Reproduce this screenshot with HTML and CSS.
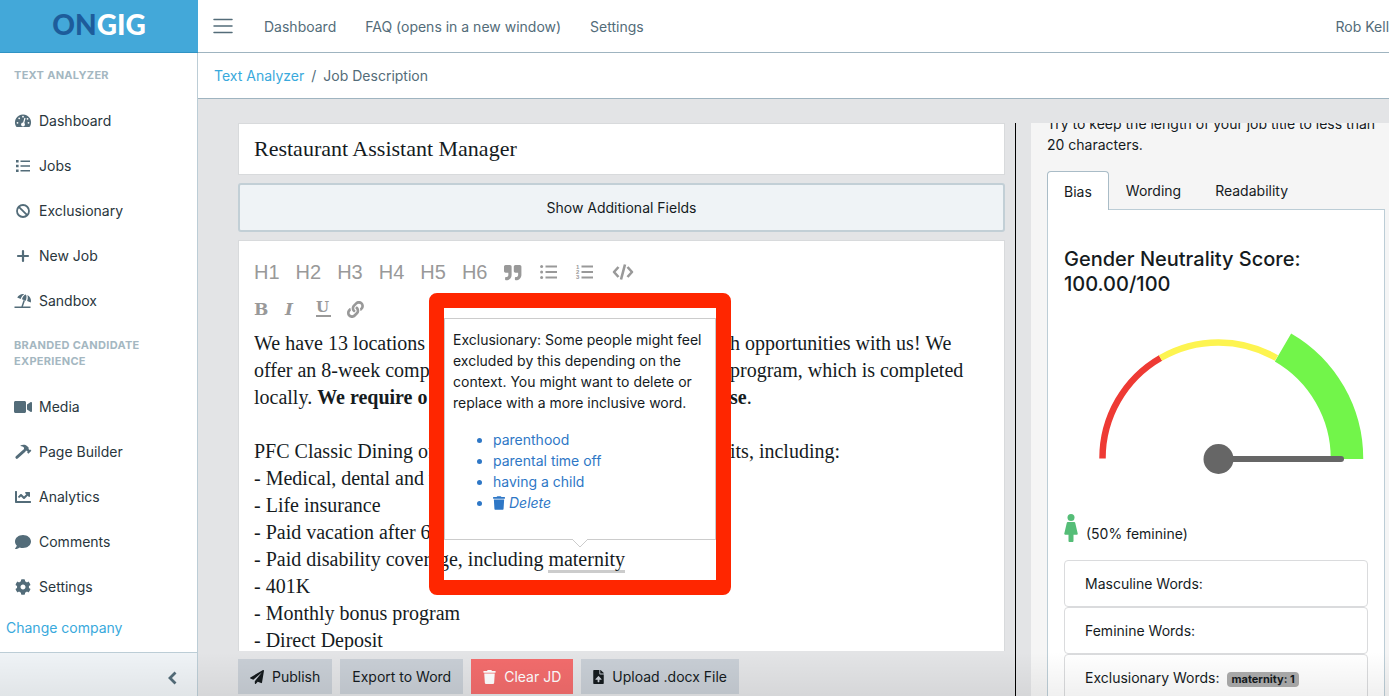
FILE: index.html
```html
<!DOCTYPE html>
<html lang="en">
<head>
<meta charset="utf-8">
<title>Ongig Text Analyzer</title>
<link rel="stylesheet" href="styles.css">
</head>
<body>
<div class="app">
  <aside class="sidebar">
    <a class="logo" href="#"><span class="logo-on">ON</span><span>GIG</span></a>
    <nav class="side-nav">
      <h2 class="side-title">Text Analyzer</h2>
      <a class="side-link" href="#"><svg class="side-icon" viewBox="0 0 18 16"><path fill="currentColor" d="M9 1.500a8 8 0 0 0-7.200 11.600c.3.600.6.900 1.200.9h12c.6 0 .9-.3 1.200-.9A8 8 0 0 0 9 1.500z"/><g fill="#fff"><circle cx="9" cy="3.700" r=".9"/><circle cx="5.200" cy="5.300" r=".9"/><circle cx="3.500" cy="9.800" r=".9"/><circle cx="14.500" cy="9.800" r=".9"/><circle cx="13.500" cy="5.800" r=".9"/><circle cx="9" cy="11.500" r="1.900"/></g><path d="M9.200 11.500l1.800-6.500" stroke="#fff" stroke-width="1.200"/></svg>Dashboard</a>
      <a class="side-link" href="#"><svg class="side-icon" viewBox="0 0 18 16"><path fill="currentColor" d="M2 2h2.600v2.600H2zM2 6.700h2.600v2.600H2zM2 11.400h2.600V14H2zM6.500 2.600H16v1.500H6.500zM6.500 7.200H16v1.500H6.500zM6.500 11.900H16v1.500H6.500z"/></svg>Jobs</a>
      <a class="side-link" href="#"><svg class="side-icon" viewBox="0 0 18 16"><g fill="none" stroke="currentColor" stroke-width="1.800"><circle cx="9" cy="8" r="6"/><path d="M4.800 3.800l8.400 8.400"/></g></svg>Exclusionary</a>
      <a class="side-link" href="#"><svg class="side-icon" viewBox="0 0 18 16"><path d="M9 3v10M4 8h10" stroke="currentColor" stroke-width="2.200" stroke-linecap="round"/></svg>New Job</a>
      <a class="side-link" href="#"><svg class="side-icon" viewBox="0 0 18 16"><g fill="currentColor"><path d="M3.200 4.600C5 1.700 7.600.6 10.300 1.200 8.500 2.200 7.300 3.900 6.700 5.900zM7.900 6.300c.9-2.600 2.300-4.400 3.900-4.700 1 .9.900 3.300.1 6.100zM13.100 8.100c.9-2.900.8-4.800.2-6.200 2.700 1.300 4.200 4.100 3.600 7.500zM.5 13.600h16v1.500H.5z"/></g><path d="M10.300 7.200L8 14" stroke="currentColor" stroke-width="1.500"/></svg>Sandbox</a>
      <h2 class="side-title">Branded Candidate Experience</h2>
      <a class="side-link" href="#"><svg class="side-icon" viewBox="0 0 576 512"><path fill="currentColor" d="M336.200 64H47.800C21.400 64 0 85.400 0 111.800v288.400C0 426.600 21.400 448 47.800 448h288.400c26.400 0 47.800-21.400 47.800-47.800V111.800c0-26.400-21.400-47.800-47.800-47.800zm189.400 37.700L416 177.300v157.400l109.600 75.500c21.200 14.600 50.400-.3 50.400-25.800V127.500c0-25.400-29.100-40.400-50.400-25.800z"/></svg>Media</a>
      <a class="side-link" href="#"><svg class="side-icon" viewBox="0 0 18 16"><path fill="currentColor" d="M6.500 1.500C8.500.3 11.500.4 13 2l1.600 1.600v1.500l.8.800.8-.4 1.200 1.200-3 3-1.200-1.200.4-.9-.8-.8h-1.500L10 5.400V3.800C9.200 2.600 8 2 6.500 1.900z"/><path d="M10.400 6.600L2.800 13.400" stroke="currentColor" stroke-width="2.800" stroke-linecap="round"/></svg>Page Builder</a>
      <a class="side-link" href="#"><svg class="side-icon" viewBox="-32 0 576 512"><path fill="currentColor" d="M496 384H64V80c0-8.840-7.160-16-16-16H16C7.160 64 0 71.160 0 80v336c0 17.670 14.330 32 32 32h464c8.840 0 16-7.160 16-16v-32c0-8.840-7.160-16-16-16zM464 96H345.940c-21.380 0-32.090 25.850-16.970 40.970l32.400 32.400L288 242.750l-73.370-73.370c-12.500-12.500-32.760-12.500-45.250 0l-68.690 68.690c-6.250 6.250-6.250 16.380 0 22.630l22.620 22.620c6.250 6.250 16.380 6.250 22.630 0L192 237.250l73.370 73.370c12.500 12.500 32.760 12.500 45.250 0l96-96 32.400 32.400c15.120 15.120 40.970 4.410 40.970-16.970V112c.01-8.840-7.150-16-15.990-16z"/></svg>Analytics</a>
      <a class="side-link" href="#"><svg class="side-icon" viewBox="-32 0 576 512"><path fill="currentColor" d="M256 32C114.600 32 0 125.100 0 240c0 49.600 21.400 95 57 130.700C44.500 421.100 2.700 466 2.200 466.500c-2.200 2.300-2.800 5.700-1.500 8.700S4.800 480 8 480c66.300 0 116-31.800 140.600-51.400 32.700 12.300 69 19.400 107.400 19.400 141.400 0 256-93.100 256-208S397.400 32 256 32z"/></svg>Comments</a>
      <a class="side-link" href="#"><svg class="side-icon" viewBox="-32 0 576 512"><path fill="currentColor" d="M487.400 315.700l-42.600-24.600c4.300-23.200 4.300-47 0-70.200l42.600-24.600c4.900-2.800 7.100-8.600 5.500-14-11.100-35.600-30-67.800-54.700-94.600-3.800-4.100-10-5.100-14.800-2.300L380.800 110c-17.900-15.400-38.500-27.300-60.800-35.100V25.800c0-5.600-3.900-10.500-9.400-11.700-36.700-8.200-74.300-7.800-109.200 0-5.500 1.200-9.400 6.100-9.400 11.700V75c-22.200 7.900-42.800 19.800-60.800 35.100L88.700 85.500c-4.900-2.800-11-1.900-14.800 2.300-24.700 26.700-43.600 58.900-54.700 94.600-1.700 5.400.6 11.200 5.500 14L67.300 221c-4.300 23.200-4.300 47 0 70.200l-42.600 24.600c-4.900 2.800-7.100 8.600-5.500 14 11.100 35.600 30 67.800 54.700 94.600 3.800 4.100 10 5.100 14.800 2.300l42.600-24.600c17.900 15.400 38.500 27.300 60.800 35.100v49.200c0 5.600 3.900 10.500 9.400 11.700 36.700 8.200 74.300 7.800 109.200 0 5.500-1.200 9.400-6.100 9.400-11.700v-49.200c22.200-7.900 42.800-19.800 60.800-35.100l42.600 24.600c4.900 2.800 11 1.900 14.800-2.300 24.700-26.700 43.600-58.900 54.700-94.600 1.500-5.500-.7-11.300-5.600-14.100zM256 336c-44.100 0-80-35.900-80-80s35.900-80 80-80 80 35.900 80 80-35.900 80-80 80z"/></svg>Settings</a>
      <a class="change" href="#">Change company</a>
    </nav>
    <button class="collapse" aria-label="Collapse sidebar"><svg width="10" height="14" viewBox="0 0 10 14"><path d="M8.500 1.500L3 7l5.500 5.500" fill="none" stroke="currentColor" stroke-width="2.800"/></svg></button>
  </aside>

  <div class="page">
    <header class="topbar">
      <button class="burger" aria-label="Toggle menu"><svg width="20" height="16" viewBox="0 0 20 16"><path d="M1 1.500h18M1 8h18M1 14.500h18" stroke="currentColor" stroke-width="1.500" stroke-linecap="round"/></svg></button>
      <nav class="top-nav">
        <a href="#">Dashboard</a>
        <a href="#">FAQ (opens in a new window)</a>
        <a href="#">Settings</a>
      </nav>
      <a class="user" href="#">Rob Kelly</a>
    </header>
    <nav class="crumbs"><a href="#">Text Analyzer</a><span>/</span><span>Job Description</span></nav>

    <main class="workspace">
      <section class="editor-col">
        <input class="job-title" aria-label="Job title" value="Restaurant Assistant Manager">
        <button class="more-fields">Show Additional Fields</button>
        <div class="editor">
          <div class="tools">
            <button>H1</button><button>H2</button><button>H3</button><button>H4</button><button>H5</button><button>H6</button>
            <button aria-label="Quote"><svg class="tool-icon" viewBox="0 0 20 20"><path transform="translate(1 2) scale(.034)" fill="currentColor" d="M464 32H336c-26.500 0-48 21.500-48 48v128c0 26.500 21.500 48 48 48h80v64c0 35.300-28.700 64-64 64h-8c-13.300 0-24 10.700-24 24v48c0 13.300 10.700 24 24 24h8c88.400 0 160-71.600 160-160V80c0-26.500-21.500-48-48-48zm-288 0H48C21.500 32 0 53.500 0 80v128c0 26.500 21.500 48 48 48h80v64c0 35.300-28.700 64-64 64h-8c-13.300 0-24 10.700-24 24v48c0 13.300 10.700 24 24 24h8c88.400 0 160-71.600 160-160V80c0-26.500-21.500-48-48-48z"/></svg></button>
            <button aria-label="Bulleted list"><svg class="tool-icon" viewBox="0 0 20 20"><g fill="currentColor"><circle cx="2.600" cy="4.500" r="1.500"/><circle cx="2.600" cy="10" r="1.500"/><circle cx="2.600" cy="15.500" r="1.500"/><path d="M6.500 3.500H18v2H6.500zM6.500 9H18v2H6.500zM6.500 14.500H18v2H6.500z"/></g></svg></button>
            <button aria-label="Numbered list"><svg class="tool-icon" viewBox="0 0 20 20"><g fill="currentColor"><path d="M6.500 3.500H18v2H6.500zM6.500 9H18v2H6.500zM6.500 14.500H18v2H6.500z"/><g class="list-digits"><text x="1" y="7">1</text><text x="1" y="12">2</text><text x="1" y="17">3</text></g></g></svg></button>
            <button aria-label="Code"><svg class="tool-icon wide" viewBox="0 0 24 20"><path d="M7.500 5L3 10l4.500 5M16.500 5l4.500 5-4.500 5M14 2.500l-4 15" fill="none" stroke="currentColor" stroke-width="2.600" stroke-linejoin="round"/></svg></button>
          </div>
          <div class="tools">
            <button class="slab" aria-label="Bold"><b>B</b></button>
            <button class="slab" aria-label="Italic"><b><i>I</i></b></button>
            <button class="slab" aria-label="Underline"><span class="under">U</span></button>
            <button aria-label="Link"><svg class="tool-icon" viewBox="0 0 20 20"><path transform="translate(0 2) scale(.033)" fill="currentColor" d="M326.612 185.391c59.747 59.809 58.927 155.698.36 214.590-.11.12-.24.25-.36.37l-67.200 67.200c-59.270 59.270-155.699 59.262-214.960 0-59.270-59.260-59.270-155.700 0-214.960l37.106-37.106c9.840-9.840 26.786-3.300 27.294 10.606.648 17.722 3.826 35.527 9.690 52.721 1.986 5.822.567 12.262-3.783 16.612l-13.087 13.087c-28.026 28.026-28.905 73.660-1.155 101.960 28.024 28.579 74.086 28.749 102.325.51l67.200-67.190c28.191-28.191 28.073-73.757 0-101.830-3.701-3.694-7.429-6.564-10.341-8.569a16.037 16.037 0 0 1-6.947-12.606c-.396-10.567 3.348-21.456 11.698-29.806l21.054-21.055c5.521-5.521 14.182-6.199 20.584-1.731a152.482 152.482 0 0 1 20.522 17.197zM467.547 44.449c-59.261-59.262-155.690-59.270-214.960 0l-67.200 67.200c-.12.12-.25.25-.36.37-58.566 58.892-59.387 154.781.36 214.590a152.454 152.454 0 0 0 20.521 17.196c6.402 4.468 15.064 3.789 20.584-1.731l21.054-21.055c8.350-8.350 12.094-19.239 11.698-29.806a16.037 16.037 0 0 0-6.947-12.606c-2.912-2.005-6.640-4.875-10.341-8.569-28.073-28.073-28.191-73.639 0-101.830l67.200-67.190c28.239-28.239 74.300-28.069 102.325.51 27.750 28.300 26.872 73.934-1.155 101.960l-13.087 13.087c-4.350 4.350-5.769 10.790-3.783 16.612 5.864 17.194 9.042 34.999 9.690 52.721.509 13.906 17.454 20.446 27.294 10.606l37.106-37.106c59.271-59.259 59.271-155.699.001-214.959z"/></svg></button>
          </div>
          <div class="copy">
            <p><span class="lead"><span>We have 13 locations in</span><span>wit</span></span>h opportunities with us! We</p>
            <p><span class="lead"><span>offer an 8-week compre</span></span>program, which is completed</p>
            <p><span class="lead"><span>locally. <b>We require o</b></span><b>the</b></span><b>se</b>.</p>
            <p><br></p>
            <p><span class="lead"><span>PFC Classic Dining offe</span><span>benef</span></span>its, including:</p>
            <p>- Medical, dental and vi</p>
            <p>- Life insurance</p>
            <p>- Paid vacation after 6</p>
            <p>- Paid disability coverage, including <span class="flag">maternity</span></p>
            <p>- 401K</p>
            <p>- Monthly bonus program</p>
            <p>- Direct Deposit</p>
          </div>
          <div class="popover">
            <p>Exclusionary: Some people might feel excluded by this depending on the context. You might want to delete or replace with a more inclusive word.</p>
            <ul>
              <li><a href="#">parenthood</a></li>
              <li><a href="#">parental time off</a></li>
              <li><a href="#">having a child</a></li>
              <li><a href="#"><svg class="bin" viewBox="0 0 448 512"><path fill="currentColor" d="M432 32H312l-9.400-18.700A24 24 0 0 0 281.100 0H166.800a23.720 23.720 0 0 0-21.400 13.300L136 32H16A16 16 0 0 0 0 48v32a16 16 0 0 0 16 16h416a16 16 0 0 0 16-16V48a16 16 0 0 0-16-16zM53.200 467a48 48 0 0 0 47.900 45h245.800a48 48 0 0 0 47.900-45L416 128H32z"/></svg><i>Delete</i></a></li>
            </ul>
            <svg class="arrow" viewBox="0 0 18 9"><path d="M1 0l8 8 8-8" fill="#fff" stroke="#ccc"/></svg>
          </div>
          <div class="highlight"></div>
        </div>
        <div class="actions">
          <button><svg width="14" height="14" viewBox="0 0 512 512"><path fill="currentColor" d="M476 3.200L12.500 270.600c-18.100 10.400-15.800 35.600 2.200 43.200L121 358.400l287.300-253.200c5.500-4.900 13.300 2.600 8.600 8.300L176 407v80.500c0 23.600 28.500 32.900 42.500 15.800L282 426l124.600 52.200c14.200 6 30.400-2.900 33-18.200l72-432C515 7.800 493.300-6.800 476 3.200z"/></svg>Publish</button>
          <button>Export to Word</button>
          <button class="danger"><svg width="13" height="14" viewBox="0 0 448 512"><path fill="currentColor" d="M432 32H312l-9.400-18.700A24 24 0 0 0 281.100 0H166.800a23.720 23.720 0 0 0-21.400 13.300L136 32H16A16 16 0 0 0 0 48v32a16 16 0 0 0 16 16h416a16 16 0 0 0 16-16V48a16 16 0 0 0-16-16zM53.200 467a48 48 0 0 0 47.900 45h245.800a48 48 0 0 0 47.900-45L416 128H32z"/></svg>Clear JD</button>
          <button><svg width="11" height="14" viewBox="0 0 384 512"><path fill="currentColor" d="M224 136V0H24C10.700 0 0 10.700 0 24v464c0 13.300 10.700 24 24 24h336c13.300 0 24-10.700 24-24V160H248c-13.200 0-24-10.800-24-24zm65.180 216.010H224v80c0 8.840-7.160 16-16 16h-32c-8.840 0-16-7.160-16-16v-80H94.820c-14.280 0-21.410-17.290-11.270-27.360l96.420-95.700c6.650-6.610 17.390-6.610 24.040 0l96.420 95.700c10.150 10.070 3.030 27.360-11.250 27.360zM377 105L279.100 7c-4.500-4.500-10.600-7-17-7H256v128h128v-6.100c0-6.300-2.500-12.400-7-16.900z"/></svg>Upload .docx File</button>
        </div>
      </section>

      <div class="score-col">
        <section class="scores">
          <p class="tip">Try to keep the length of your job title to less than 20 characters.</p>
          <div class="tabs" role="tablist">
            <button class="tab active" role="tab">Bias</button>
            <button class="tab" role="tab">Wording</button>
            <button class="tab" role="tab">Readability</button>
          </div>
          <div class="panel">
            <h1>Gender Neutrality Score: 100.00/100</h1>
            <svg class="gauge" viewBox="1064 320 304 160">
              <g fill="none">
                <path d="M1102.500 458.500A116 116 0 0 1 1160.500 358" stroke="#ee3a34" stroke-width="6.500"/>
                <path d="M1160.500 358A116 116 0 0 1 1276.500 358" stroke="#fdf450" stroke-width="6.500"/>
                <path d="M1283 347.500A128.500 128.500 0 0 1 1347 459" stroke="#72f54a" stroke-width="32.500"/>
                <path d="M1218.500 459H1341" stroke="#666" stroke-width="6" stroke-linecap="round"/>
              </g>
              <circle cx="1218.500" cy="459" r="15" fill="#666"/>
            </svg>
            <p class="lean"><svg width="14" height="28" viewBox="0 0 14 28"><g fill="#55bd77"><circle cx="7" cy="3.500" r="3.500"/><path d="M3.800 8h6.400c.6 0 .9.300 1 .8L13.700 19.500c.2.800-.2 1.200-.9 1.200H9.500v6c0 .9-.4 1.300-1 1.300h-3c-.6 0-1-.4-1-1.300v-6H1.200c-.7 0-1.100-.4-.9-1.200L2.800 8.800c.1-.5.400-.8 1-.8z"/></g></svg>(50% feminine)</p>
            <div class="card">Masculine Words:</div>
            <div class="card">Feminine Words:</div>
            <div class="card">Exclusionary Words: <span class="badge">maternity: 1</span></div>
          </div>
        </section>
      </div>
    </main>
  </div>
  <div class="shade"></div>
</div>
</body>
</html>
```

FILE: styles.css
```css
* { box-sizing: border-box; }

body {
  margin: 0;
  font: 14px/21px Inter, "Liberation Sans", sans-serif;
  color: #151b1e;
}

a { color: inherit; text-decoration: none; }
button, input { font: inherit; color: inherit; }
button { border: 0; background: none; padding: 0; }
h1, h2, p { margin: 0; }

.app {
  position: relative;
  display: flex;
  height: 100vh;
  overflow: hidden;
}

/* Sidebar */
.sidebar {
  display: flex;
  flex: 0 0 198px;
  flex-direction: column;
  background: #fff;
}
.logo {
  height: 53px;
  border-bottom: 1px solid #2f93c4;
  background: #43a8d9;
  color: #fff;
  font: 900 28px/49px Lato, sans-serif;
  text-align: center;
}
.logo-on { color: #1d5c9b; }
.side-nav {
  flex: 1;
  min-height: 0;
  border-right: 1px solid #bccdd6;
  overflow: hidden;
}
.side-title {
  padding: 14px 14px 15px;
  color: #a4b7c1;
  font-size: 11px;
  line-height: 16px;
  text-transform: uppercase;
  letter-spacing: 0.3px;
}
.side-link {
  display: flex;
  align-items: center;
  gap: 7px;
  height: 45px;
  padding-left: 14px;
  color: #29363d;
}
.side-icon {
  width: 18px;
  height: 16px;
  color: #536c79;
}
.change {
  display: block;
  padding: 8px 6px;
  color: #39a9dc;
}
.collapse {
  display: flex;
  align-items: center;
  justify-content: flex-end;
  height: 44px;
  padding: 6px 20px 0 0;
  border-top: 1px solid #bccdd6;
  border-right: 1px solid #bccdd6;
  background: #eff3f6;
  color: #536c79;
}

/* Top bars */
.page {
  display: flex;
  flex: 1;
  flex-direction: column;
  min-width: 0;
}
.topbar {
  display: flex;
  align-items: center;
  height: 53px;
  padding-left: 15px;
  border-bottom: 1px solid #9fb4c0;
  color: #536c79;
  white-space: nowrap;
  overflow: hidden;
}
.burger { display: flex; }
.top-nav {
  display: flex;
  flex: 1;
  gap: 29px;
  padding-left: 31px;
}
.user { margin-right: -8px; }
.crumbs {
  display: flex;
  gap: 7px;
  padding: 12px 16px;
  border-bottom: 1px solid #9fb4c0;
  color: #536c79;
}
.crumbs a { color: #39a9dc; }

/* Workspace */
.workspace {
  display: grid;
  flex: 1;
  grid-template-columns: minmax(0, 1fr) 374px;
  gap: 10px;
  min-height: 0;
  padding: 24px 0 0 40px;
  background: #e3e4e6;
}
.editor-col {
  display: flex;
  flex-direction: column;
  gap: 8px;
  min-height: 0;
  padding-bottom: 2px;
}
.job-title {
  width: 100%;
  height: 52px;
  padding: 0 15px;
  border: 1px solid #d8dadc;
  background: #fff;
  font: 22px/30px "Liberation Serif", serif;
}
.more-fields {
  height: 49px;
  flex: none;
  border: 2px solid #c2cfd6;
  border-radius: 3px;
  background: #eff3f6;
}
.editor {
  position: relative;
  flex: 1;
  min-height: 0;
  padding: 12px 15px 0;
  border: 1px solid #d8dadc;
  border-bottom: 0;
  background: #fff;
}
.tools {
  display: flex;
  align-items: center;
  gap: 16px;
  height: 37px;
  color: #999;
  font: 20px/24px "Liberation Sans", sans-serif;
}
.tools button { min-width: 15px; text-align: left; }
.tool-icon { display: block; width: 20px; height: 20px; }
.tool-icon.wide { width: 24px; }
.list-digits { font: bold 6px "Liberation Sans", sans-serif; }
.tools .slab { font: 17px/20px "DejaVu Serif", serif; }
.under {
  display: block;
  border-bottom: 2px solid;
  line-height: 15px;
  font-weight: 700;
  font-size: 15px;
}
.copy {
  height: 323px;
  padding-top: 3px;
  font: 20px/27px "Liberation Serif", serif;
  white-space: nowrap;
  overflow: hidden;
}
.lead {
  display: inline-flex;
  justify-content: space-between;
  width: 476px;
}
.flag { border-bottom: 3px solid #ccc; }
.popover {
  position: absolute;
  top: 77px;
  left: 205px;
  width: 272px;
  height: 222px;
  padding: 10px 8px;
  border: 1px solid #ccc;
  background: #fff;
}
.popover ul {
  margin: 16px 0 0;
  padding-left: 40px;
  color: #2e77c6;
}
.bin { width: 12px; height: 14px; margin-right: 4px; vertical-align: -2px; }
.arrow {
  position: absolute;
  bottom: -9px;
  left: 126px;
  width: 18px;
  height: 9px;
}
.highlight {
  position: absolute;
  top: 52px;
  left: 190px;
  width: 302px;
  height: 302px;
  border: 15px solid #ff2600;
  border-radius: 8px;
}
.actions { display: flex; gap: 8px; }
.actions button {
  display: flex;
  align-items: center;
  gap: 8px;
  height: 35px;
  padding: 0 12px;
  background: #c8ced5;
}
.actions .danger { background: #f26c6c; color: #fff; }

/* Scores */
.score-col {
  min-height: 0;
  padding-left: 15px;
  border-left: 1px solid #000;
}
.scores {
  height: 100%;
  padding: 0 4px 0 16px;
  background: #f5f5f5;
  overflow: hidden;
}
.tip { margin: -10px 0 16px; }
.tabs { display: flex; height: 38px; }
.tab {
  height: 39px;
  padding: 0 16px;
  border: 1px solid transparent;
}
.tab.active {
  position: relative;
  border-color: #a9bcc7;
  border-bottom: 0;
  border-radius: 4px 4px 0 0;
  background: #fff;
}
.panel {
  min-height: 600px;
  padding: 37px 16px;
  border: 1px solid #bccdd6;
  background: #fff;
}
.panel h1 { font-size: 20px; font-weight: 500; line-height: 25px; }
.gauge { display: block; width: 100%; margin-top: 23px; }
.lean {
  display: flex;
  align-items: flex-end;
  gap: 8px;
  padding: 34px 0 18px;
  line-height: 17px;
}
.card {
  height: 47px;
  padding: 12px 20px;
  border: 1px solid #dadbdd;
  border-radius: 4px;
}
.badge {
  display: inline-block;
  margin-left: 4px;
  padding: 0 4px;
  border-radius: 4px;
  background: #acacac;
  font-size: 11px;
  font-weight: 700;
  line-height: 15px;
}
.shade {
  position: absolute;
  right: 0;
  bottom: 0;
  left: 0;
  height: 44px;
  background: linear-gradient(transparent, rgba(0, 0, 0, 0.06));
  pointer-events: none;
}
```
